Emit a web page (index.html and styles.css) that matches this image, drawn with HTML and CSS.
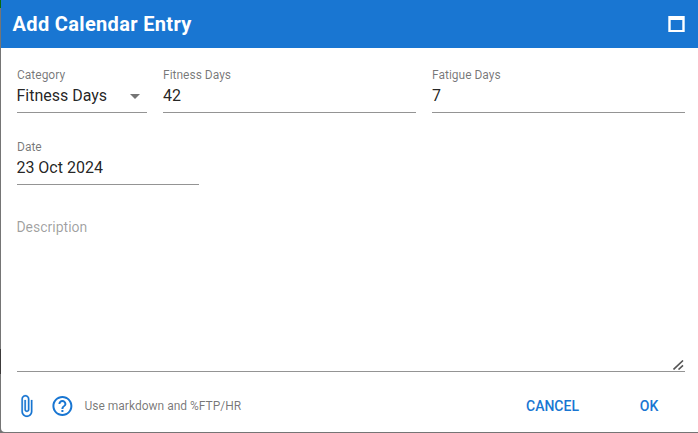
FILE: index.html
```html
<!DOCTYPE html>
<html lang="en">
<head>
  <meta charset="UTF-8">
  <meta name="viewport" content="width=device-width, initial-scale=1.0">
  <title>Add Calendar Entry</title>
  <link rel="stylesheet" href="styles.css">
</head>
<body>
  <div class="dialog">
    <header class="toolbar">
      <h1 class="title">Add Calendar Entry</h1>
      <svg class="maximize" width="17" height="16" viewBox="0 0 17 16">
        <path fill="#fff" fill-rule="evenodd" d="M0.3 0h16.4v16H0.3zM2.7 4v10h11.6V4z"/>
      </svg>
    </header>
    <main class="content">
      <div class="row">
        <div class="field category">
          <span class="label">Category</span>
          <span class="value">Fitness Days</span>
          <svg class="arrow" width="10" height="5" viewBox="0 0 10 5"><path fill="#757575" d="M0 0l5 5 5-5z"/></svg>
        </div>
        <div class="field">
          <span class="label">Fitness Days</span>
          <span class="value">42</span>
        </div>
        <div class="field">
          <span class="label">Fatigue Days</span>
          <span class="value">7</span>
        </div>
      </div>
      <div class="row">
        <div class="field date">
          <span class="label">Date</span>
          <span class="value">23 Oct 2024</span>
        </div>
      </div>
      <div class="description">
        <span class="placeholder">Description</span>
        <svg class="resize" width="11" height="10" viewBox="0 0 11 10">
          <path fill="none" stroke="#555" stroke-width="1.6" d="M0.5 9.5L10 0.5M5.5 9.5L10 5.3"/>
        </svg>
      </div>
    </main>
    <footer class="actions">
      <svg class="clip" width="24" height="24" viewBox="0 0 24 24">
        <path fill="#1976d2" stroke="#1976d2" stroke-width="0.2" d="M16.5 6v11.5c0 2.21-1.79 4-4 4s-4-1.79-4-4V5c0-1.38 1.12-2.5 2.5-2.5s2.5 1.12 2.5 2.5v10.5c0 .55-.45 1-1 1s-1-.45-1-1V6H10v9.5c0 1.38 1.12 2.5 2.5 2.5s2.5-1.12 2.5-2.5V5c0-2.21-1.79-4-4-4S7 2.79 7 5v12.5c0 3.04 2.46 5.5 5.5 5.5s5.5-2.46 5.5-5.5V6h-1.5z" transform="translate(0.4 0)"/>
      </svg>
      <svg class="help" width="24" height="24" viewBox="0 0 24 24">
        <path fill="#1976d2" d="M11 18h2v-2h-2v2zm1-16C6.48 2 2 6.48 2 12s4.48 10 10 10 10-4.48 10-10S17.52 2 12 2zm0 18c-4.41 0-8-3.59-8-8s3.59-8 8-8 8 3.59 8 8-3.59 8-8 8zm0-14c-2.21 0-4 1.79-4 4h2c0-1.1.9-2 2-2s2 .9 2 2c0 2-3 1.75-3 5h2c0-2.25 3-2.5 3-5 0-2.21-1.79-4-4-4z" transform="translate(0.4 0)"/>
      </svg>
      <span class="hint">Use markdown and %FTP/HR</span>
      <button class="btn cancel">Cancel</button>
      <button class="btn ok">OK</button>
    </footer>
  </div>
</body>
</html>
```

FILE: styles.css
```css
body {
  margin: 0;
  height: 433px;
  background: #757575;
  font-family: Roboto, sans-serif;
  color: rgba(0, 0, 0, 0.87);
  overflow: hidden;
}

/* page behind the dialog */
body {
  background: linear-gradient(#0a6b0a 8px, #757575 8px, #757575 349px, #3c3a3a 349px, #3c3a3a 374px, #757575 374px);
}

.dialog {
  display: flex;
  flex-direction: column;
  width: 700px;
  height: 432px;
  margin-left: 1px;
  background: #fff;
  border-radius: 0 0 4px 4px;
  overflow: hidden;
}

.toolbar {
  display: flex;
  align-items: center;
  justify-content: space-between;
  box-sizing: border-box;
  height: 48px;
  padding: 0 16px 0 11.5px;
  background: #1976d2;
  color: #fff;
}

.title {
  margin: 0;
  font-size: 20px;
  font-weight: 700;
  line-height: 24px;
  letter-spacing: 0.34px;
}

.content {
  padding: 16px 16px 0;
}

.row {
  display: flex;
  gap: 16px;
  height: 72px;
}

.field {
  position: relative;
  flex: 1;
  display: flex;
  flex-direction: column;
  box-sizing: border-box;
  height: 49px;
  padding-top: 3px;
  border-bottom: 1px solid #949494;
}

.category {
  flex: 0 0 130px;
}

.date {
  flex: 0 0 182px;
}

.label {
  font-size: 12px;
  line-height: 16px;
  color: rgba(0, 0, 0, 0.54);
}

.value {
  font-size: 16px;
  line-height: 25px;
}

.category .value,
.date .value,
.placeholder {
  margin-left: -0.6px;
}

.arrow {
  position: absolute;
  right: 7.5px;
  bottom: 13px;
}

.description {
  display: flex;
  justify-content: space-between;
  box-sizing: border-box;
  height: 164px;
  padding-top: 11px;
  border-bottom: 1px solid #949494;
}

.placeholder {
  font-size: 14px;
  line-height: 16px;
  color: rgba(0, 0, 0, 0.38);
}

.resize {
  align-self: flex-end;
  margin: 0 1px 1px 0;
}

.actions {
  display: flex;
  align-items: center;
  flex: 1;
  padding: 8px 8px 0 13px;
}

.clip {
  margin-right: 12px;
}

.hint {
  flex: 1;
  margin-left: 10.5px;
  font-size: 12px;
  color: rgba(0, 0, 0, 0.54);
}

.btn {
  padding: 0;
  border: none;
  background: none;
  font-family: inherit;
  font-size: 14px;
  font-weight: 500;
  line-height: 36px;
  text-transform: uppercase;
  color: #1976d2;
  cursor: pointer;
}

.cancel {
  width: 85px;
}

.ok {
  width: 88px;
  margin-left: 10px;
}
```
